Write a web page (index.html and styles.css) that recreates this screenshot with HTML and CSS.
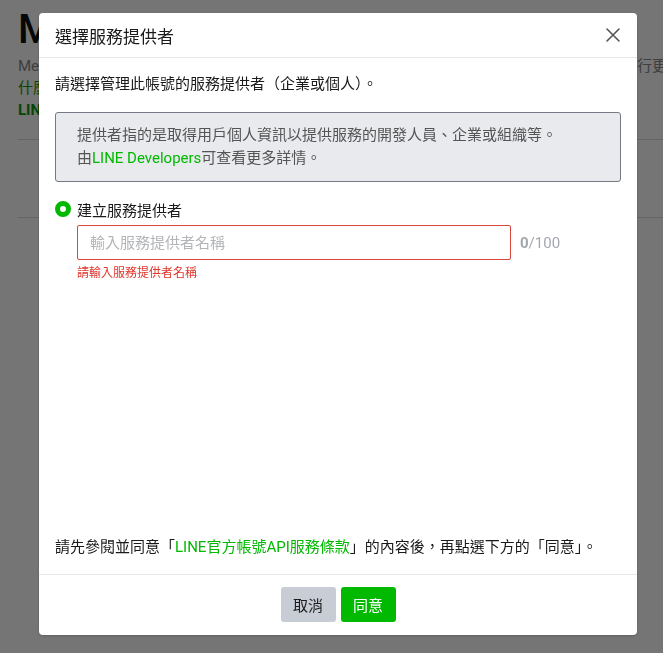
FILE: index.html
```html
<!DOCTYPE html>
<html lang="zh-Hant">
<head>
<meta charset="utf-8">
<title>選擇服務提供者</title>
<link rel="stylesheet" href="styles.css">
</head>
<body>
<div class="page">
  <h1 class="page-title">Messaging API</h1>
  <div class="page-desc"><span class="desc-left">Messaging API 設定</span><span class="desc-right">行更</span></div>
  <div class="page-link">什麼是 Messaging API？</div>
  <div class="page-link bold">LINE Developers</div>
  <hr class="page-rule first">
  <hr class="page-rule second">
</div>
<div class="overlay"></div>
<div class="modal" role="dialog">
  <div class="modal-header">
    <h2 class="modal-title">選擇服務提供者</h2>
    <button class="close" aria-label="關閉">
      <svg width="16" height="16" viewBox="0 0 16 16"><path d="M2 2L14 14M14 2L2 14" stroke="#555" stroke-width="1.6" stroke-linecap="round" fill="none"/></svg>
    </button>
  </div>
  <div class="modal-body">
    <p class="lead">請選擇管理此帳號的服務提供者（企業或個人）。</p>
    <div class="info">
      <p>提供者指的是取得用戶個人資訊以提供服務的開發人員、企業或組織等。</p>
      <p>由<a class="link">LINE Developers</a>可查看更多詳情。</p>
    </div>
    <label class="radio-row"><span class="radio"></span><span class="radio-label">建立服務提供者</span></label>
    <div class="field">
      <div class="field-row">
        <input class="text-input" type="text" placeholder="輸入服務提供者名稱">
        <span class="counter"><b>0</b>/100</span>
      </div>
      <div class="error">請輸入服務提供者名稱</div>
    </div>
    <p class="terms">請先參閱並同意「<a class="link">LINE官方帳號API服務條款</a>」的內容後，再點選下方的「同意」。</p>
  </div>
  <div class="modal-footer">
    <button class="btn btn-cancel">取消</button>
    <button class="btn btn-ok">同意</button>
  </div>
</div>
</body>
</html>
```
FILE: styles.css
```css
* { box-sizing: border-box; }
html, body { margin: 0; padding: 0; }
body {
  font-family: Roboto, "Noto Sans CJK TC", "Noto Sans", sans-serif;
  color: #1a1a1a;
  background: #fff;
  width: 663px;
  height: 653px;
  overflow: hidden;
}
.page {
  padding: 6px 0 0 18px;
}
.page-title {
  margin: 0;
  font-size: 40px;
  line-height: 48px;
  font-weight: 500;
  color: #111;
  white-space: nowrap;
}
.page-desc {
  display: flex;
  white-space: nowrap;
  overflow: hidden;
  font-size: 15px;
  line-height: 22px;
  color: #888;
  margin-top: 1px;
}
.desc-left { flex: 0 0 619px; overflow: hidden; }
.page-link {
  font-size: 15px;
  line-height: 22px;
  color: #0a9a0a;
  white-space: nowrap;
}
.page-link.bold { font-weight: 700; }
.page-rule {
  border: 0;
  border-top: 1px solid #ddd;
  margin: 0;
}
.page-rule.first { margin-top: 18px; }
.page-rule.second { margin-top: 77px; }

.overlay {
  position: fixed;
  inset: 0;
  background: rgba(0, 0, 0, 0.54);
}
.modal {
  position: fixed;
  left: 39px;
  top: 13px;
  width: 598px;
  height: 622px;
  background: #fff;
  border-radius: 4px;
  display: flex;
  flex-direction: column;
  box-shadow: 0 1px 3px rgba(0,0,0,0.2);
}
.modal-header {
  height: 45px;
  flex: 0 0 45px;
  display: flex;
  align-items: center;
  justify-content: space-between;
  padding: 0 16px;
  border-bottom: 1px solid #e6e6e6;
}
.modal-title {
  margin: 0;
  font-size: 17px;
  font-weight: 400;
  color: #1a1a1a;
}
.close {
  border: 0;
  background: none;
  padding: 0;
  width: 16px;
  height: 16px;
  display: flex;
}
.modal-body {
  flex: 1;
  display: flex;
  flex-direction: column;
  padding: 15px 16px 16px;
}
.lead {
  margin: 0;
  font-size: 15px;
  line-height: 22px;
  color: #1a1a1a;
}
.info {
  margin-top: 17px;
  background: #e9eaee;
  border: 1px solid #747985;
  border-radius: 3px;
  padding: 11px 20px 11px 21px;
  font-size: 15px;
  line-height: 23px;
  color: #555;
}
.info p { margin: 0; }
.link { color: #00b900; text-decoration: none; }
.radio-row {
  display: flex;
  align-items: center;
  margin-top: 16px;
  height: 22px;
}
.radio {
  width: 16px;
  height: 16px;
  border-radius: 50%;
  border: 5px solid #00b900;
  background: #fff;
  margin-right: 6px;
}
.radio-label {
  font-size: 15px;
  color: #1a1a1a;
}
.field {
  margin-left: 22px;
  margin-top: 5px;
}
.field-row {
  display: flex;
  align-items: center;
}
.text-input {
  width: 434px;
  height: 35px;
  border: 1px solid #d9463b;
  border-radius: 2px;
  padding: 0 12px;
  font-family: inherit;
  font-size: 15px;
  outline: none;
}
.text-input::placeholder { color: #b3b5b9; }
.counter {
  margin-left: 9px;
  font-size: 15px;
  color: #a3a7ae;
}
.counter b { font-weight: 700; }
.error {
  margin-top: 5px;
  font-size: 12px;
  line-height: 16px;
  color: #e0352b;
}
.terms {
  margin: auto 0 0;
  font-size: 15px;
  line-height: 22px;
  color: #1a1a1a;
}
.modal-footer {
  flex: 0 0 61px;
  border-top: 1px solid #e6e6e6;
  display: flex;
  justify-content: center;
  align-items: flex-start;
  gap: 5px;
  padding-top: 12px;
}
.btn {
  width: 55px;
  height: 35px;
  border: 0;
  border-radius: 3px;
  font-family: inherit;
  font-size: 15px;
}
.btn-cancel { background: #c8ccd4; color: #1a1a1a; }
.btn-ok { background: #00b900; color: #fff; }
```
